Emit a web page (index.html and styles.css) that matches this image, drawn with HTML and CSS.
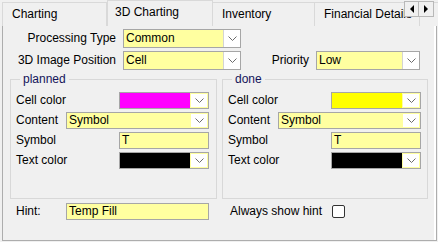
FILE: index.html
```html
<!DOCTYPE html>
<html lang="en">

<head>
    <meta charset="UTF-8">
    <title>3D Charting</title>
    <link rel="stylesheet" href="styles.css">
</head>

<body>

    <div class="tabs">
        <div class="tab tab-1">Charting</div>
        <div class="tab tab-2 active">3D Charting</div>
        <div class="tab tab-3">Inventory</div>
        <div class="tab tab-4">Financial Details</div>
        <div class="tab tab-5"></div>

        <!-- tab scroller sits over the last tabs -->
        <div class="tab-scroll">
            <span class="scroll-btn"><span class="tri-left"></span></span>
            <span class="scroll-btn"><span class="tri-right"></span></span>
        </div>
    </div>

    <div class="panel">
        <div class="top-grid">
            <label class="label-right">Processing Type</label>
            <div class="combo">
                <span class="combo-text">Common</span>
                <span class="combo-arrow"><svg width="9" height="5" viewBox="0 0 9 5"><path d="M0.5 0.5 L4.5 4.5 L8.5 0.5" fill="none" stroke="#6b6b6b" stroke-width="1"/></svg></span>
            </div>
            <span></span>
            <span></span>

            <label class="label-right">3D Image Position</label>
            <div class="combo">
                <span class="combo-text">Cell</span>
                <span class="combo-arrow"><svg width="9" height="5" viewBox="0 0 9 5"><path d="M0.5 0.5 L4.5 4.5 L8.5 0.5" fill="none" stroke="#6b6b6b" stroke-width="1"/></svg></span>
            </div>
            <label class="label-right">Priority</label>
            <div class="combo">
                <span class="combo-text">Low</span>
                <span class="combo-arrow"><svg width="9" height="5" viewBox="0 0 9 5"><path d="M0.5 0.5 L4.5 4.5 L8.5 0.5" fill="none" stroke="#6b6b6b" stroke-width="1"/></svg></span>
            </div>
        </div>

        <div class="groups">
            <fieldset class="group group-planned">
                <legend>planned</legend>
                <div class="row">
                    <span class="lbl lbl-wide">Cell color</span>
                    <div class="combo small color-combo">
                        <span class="swatch magenta"></span>
                        <span class="combo-arrow"><svg width="9" height="5" viewBox="0 0 9 5"><path d="M0.5 0.5 L4.5 4.5 L8.5 0.5" fill="none" stroke="#6b6b6b" stroke-width="1"/></svg></span>
                    </div>
                </div>
                <div class="row">
                    <span class="lbl lbl-short">Content</span>
                    <div class="combo small wide">
                        <span class="combo-text">Symbol</span>
                        <span class="combo-arrow"><svg width="9" height="5" viewBox="0 0 9 5"><path d="M0.5 0.5 L4.5 4.5 L8.5 0.5" fill="none" stroke="#6b6b6b" stroke-width="1"/></svg></span>
                    </div>
                </div>
                <div class="row">
                    <span class="lbl lbl-wide">Symbol</span>
                    <div class="edit color-combo">T</div>
                </div>
                <div class="row">
                    <span class="lbl lbl-wide">Text color</span>
                    <div class="combo small color-combo">
                        <span class="swatch black"></span>
                        <span class="combo-arrow"><svg width="9" height="5" viewBox="0 0 9 5"><path d="M0.5 0.5 L4.5 4.5 L8.5 0.5" fill="none" stroke="#6b6b6b" stroke-width="1"/></svg></span>
                    </div>
                </div>
            </fieldset>

            <fieldset class="group group-done">
                <legend>done</legend>
                <div class="row">
                    <span class="lbl lbl-wide">Cell color</span>
                    <div class="combo small color-combo">
                        <span class="swatch yellow"></span>
                        <span class="combo-arrow"><svg width="9" height="5" viewBox="0 0 9 5"><path d="M0.5 0.5 L4.5 4.5 L8.5 0.5" fill="none" stroke="#6b6b6b" stroke-width="1"/></svg></span>
                    </div>
                </div>
                <div class="row">
                    <span class="lbl lbl-short">Content</span>
                    <div class="combo small wide">
                        <span class="combo-text">Symbol</span>
                        <span class="combo-arrow"><svg width="9" height="5" viewBox="0 0 9 5"><path d="M0.5 0.5 L4.5 4.5 L8.5 0.5" fill="none" stroke="#6b6b6b" stroke-width="1"/></svg></span>
                    </div>
                </div>
                <div class="row">
                    <span class="lbl lbl-wide">Symbol</span>
                    <div class="edit color-combo">T</div>
                </div>
                <div class="row">
                    <span class="lbl lbl-wide">Text color</span>
                    <div class="combo small color-combo">
                        <span class="swatch black"></span>
                        <span class="combo-arrow"><svg width="9" height="5" viewBox="0 0 9 5"><path d="M0.5 0.5 L4.5 4.5 L8.5 0.5" fill="none" stroke="#6b6b6b" stroke-width="1"/></svg></span>
                    </div>
                </div>
            </fieldset>
        </div>

        <div class="hint-row">
            <span class="lbl lbl-short">Hint:</span>
            <div class="edit wide">Temp Fill</div>
            <span class="always">Always show hint</span>
            <span class="checkbox"></span>
        </div>
    </div>

</body>

</html>
```

FILE: styles.css
```css
/* Basic styling */
* {
    box-sizing: border-box;
}

body {
    margin: 0;
    width: 438px;
    height: 242px;
    background: #f0f0f0;
    font-family: "Liberation Sans", Arial, sans-serif;
    font-size: 12px;
    color: #000;
    overflow: hidden;
}

/* Tab strip */
.tabs {
    position: relative;
    display: flex;
    align-items: flex-start;
    height: 26px;
    overflow: hidden;
}

.tab {
    flex: none;
    margin-top: 2px;
    height: 24px;
    padding: 3px 0 0 9px;
    line-height: 16px;
    white-space: nowrap;
    overflow: hidden;
    background: #f0f0f0;
    border: 1px solid #d9d9d9;
    border-bottom: none;
}

.tab + .tab {
    border-left: none;
}

.tab-1 {
    margin-left: 2px;
    width: 105px;
}

.tab-2 {
    width: 106px;
}

.tab-3 {
    width: 102px;
}

.tab-4 {
    width: 105px;
}

.tab-5 {
    width: 60px;
    border-left: 1px solid #d9d9d9;
}

.tab.active {
    position: relative;
    z-index: 1;
    margin-top: 0;
    height: 26px;
    padding-left: 7px;
    background: #f0f0f0;
    border-left: 1px solid #d9d9d9;
    border-right: 1px solid #d9d9d9;
}

.tab.active + .tab {
    border-left: none;
}

.tab-scroll {
    position: absolute;
    left: 404px;
    top: 1px;
    display: flex;
    z-index: 2;
}

.scroll-btn {
    width: 15px;
    height: 16px;
    background: #f0f0f0;
    border: 1px solid #b8b8b8;
    display: flex;
    align-items: center;
    justify-content: center;
}

.scroll-btn + .scroll-btn {
    border-left: none;
}

.tri-left {
    width: 0;
    height: 0;
    border-top: 4px solid transparent;
    border-bottom: 4px solid transparent;
    border-right: 4px solid #000;
}

.tri-right {
    width: 0;
    height: 0;
    border-top: 4px solid transparent;
    border-bottom: 4px solid transparent;
    border-left: 4px solid #000;
}

/* Page panel */
.panel {
    margin: -1px 0 0 2px;
    width: 435px;
    height: 216px;
    border: 1px solid #adadad;
    box-shadow: inset -2px 0 0 #ffffff;
}

.top-grid {
    display: grid;
    grid-template-columns: 113px 118px 61px 104px;
    grid-auto-rows: 19px;
    column-gap: 7px;
    row-gap: 3px;
    padding-top: 3px;
}

.label-right {
    text-align: right;
    line-height: 19px;
    white-space: nowrap;
}

.combo {
    display: flex;
    height: 19px;
    background: #ffffa0;
    border: 1px solid #a6a6a6;
}

.combo-text {
    flex: 1;
    padding-left: 2px;
    line-height: 17px;
}

.combo-arrow {
    flex: none;
    width: 17px;
    background: #ffffff;
    border-left: 1px solid #d4d4d4;
    display: flex;
    align-items: center;
    justify-content: center;
}

.combo.small {
    height: 17px;
}

.combo.small .combo-text {
    line-height: 15px;
}

.combo.small .combo-arrow {
    width: 16px;
    margin: 1px;
    border: none;
}

/* Groups */
.groups {
    display: flex;
    margin-top: 2px;
}

.group {
    margin: 0;
    min-width: 0;
    padding: 6px 0 29px 5px;
    border: 1px solid #d8d8d8;
}

.group-planned {
    margin-left: 7px;
    width: 207px;
}

.group-done {
    margin-left: 5px;
    width: 206px;
}

.group legend {
    margin-left: 4px;
    padding: 0 3px;
    line-height: 14px;
    color: #14145a;
}

.row {
    display: flex;
    height: 17px;
}

.row + .row {
    margin-top: 3px;
}

.lbl {
    flex: none;
    line-height: 17px;
    white-space: nowrap;
}

.lbl-wide {
    width: 103px;
}

.lbl-short {
    width: 50px;
}

.color-combo {
    width: 90px;
}

.wide {
    width: 143px;
}

.swatch {
    flex: 1;
}

.magenta {
    background: #ff00ff;
}

.yellow {
    background: #ffff00;
}

.black {
    background: #000000;
}

.edit {
    height: 17px;
    padding-left: 2px;
    line-height: 15px;
    background: #ffffa0;
    border: 1px solid #a6a6a6;
}

/* Hint line */
.hint-row {
    display: flex;
    align-items: center;
    margin-top: 4px;
    padding-left: 13px;
    height: 17px;
}

.always {
    margin-left: 21px;
    line-height: 17px;
}

.checkbox {
    margin-left: 10px;
    width: 13px;
    height: 13px;
    border: 1px solid #333333;
    border-radius: 2px;
    background: #ffffff;
}
```
